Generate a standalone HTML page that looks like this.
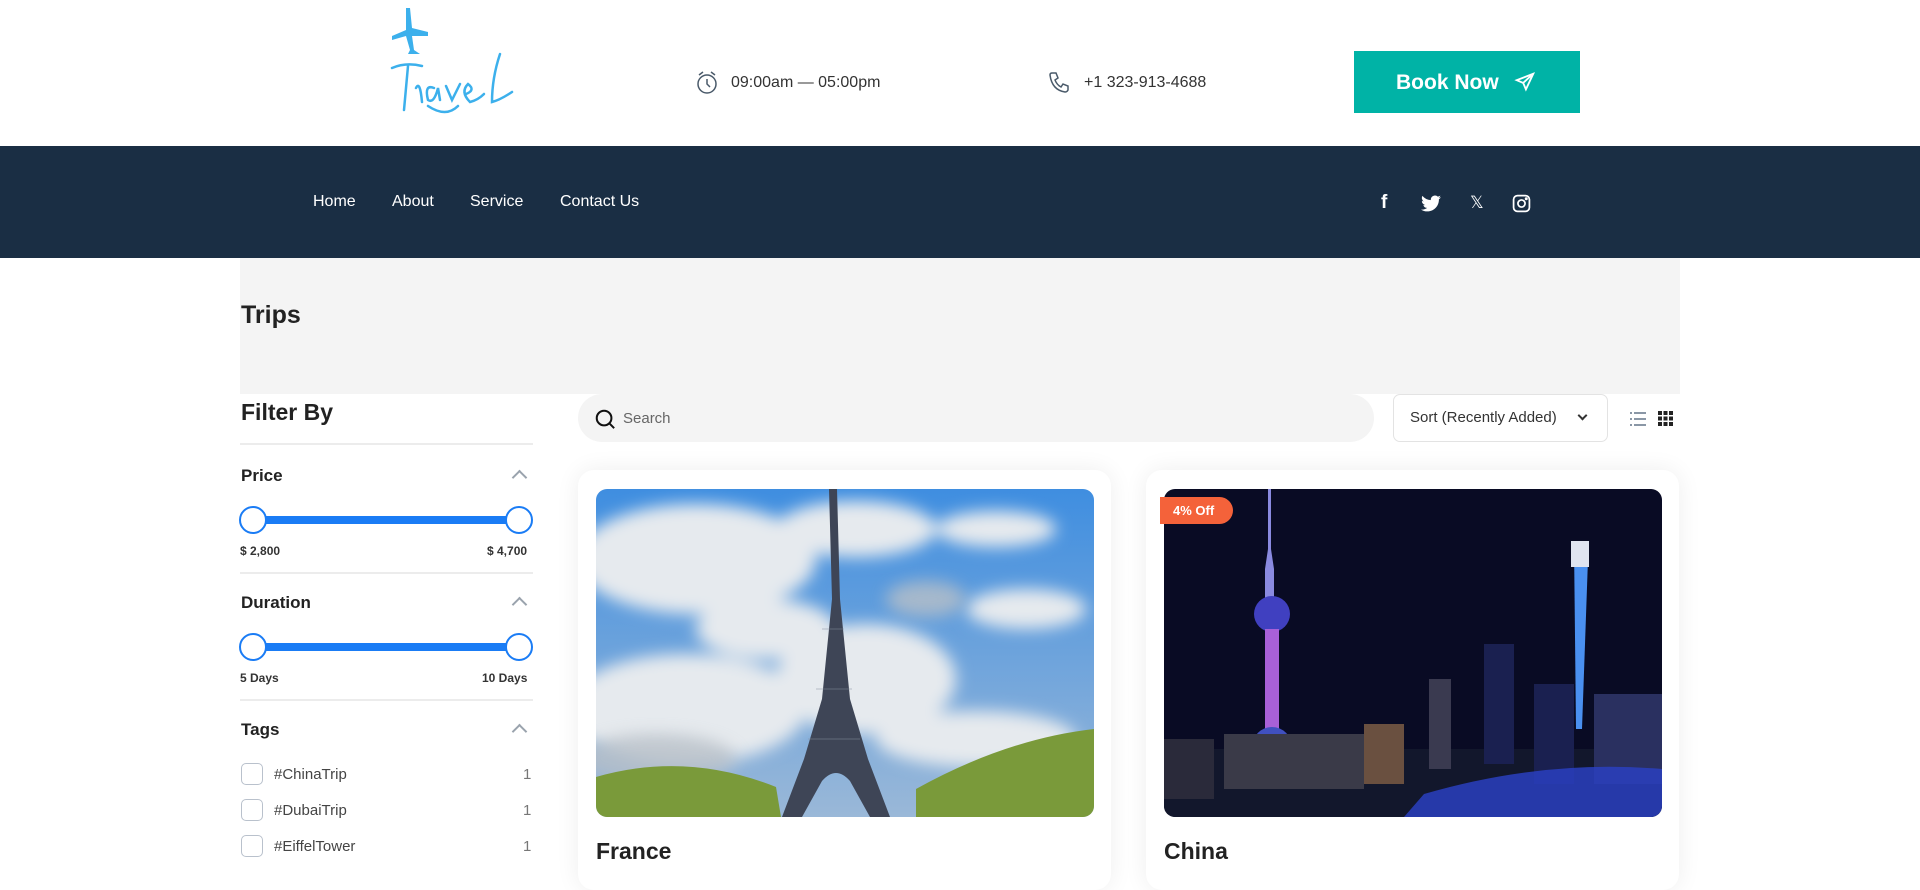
<!DOCTYPE html>
<html><head><meta charset="utf-8"><style>
*{box-sizing:border-box;margin:0;padding:0}
body{width:1920px;height:869px;overflow:hidden;background:#fff;font-family:"Liberation Sans",Arial,sans-serif;color:#222;position:relative}
.a{position:absolute}
.nav a{position:absolute;color:#fff;font-size:16px;top:193px;text-decoration:none}
.lbl{font-weight:bold;font-size:17px;color:#222}
.chev{width:11px;height:11px;border-left:2px solid #9aa3ad;border-top:2px solid #9aa3ad;transform:rotate(45deg)}
.track{height:8px;background:#1a7cf5;left:253px;width:266px}
.th{width:28px;height:28px;border-radius:50%;border:2.5px solid #1a7cf5;background:#fff}
.sm{font-size:12px;font-weight:bold;color:#333}
.hr{height:2px;background:#ececec;left:240px;width:293px}
.cb{width:22px;height:22px;border:1.5px solid #b9c1cc;border-radius:5px;left:241px}
.tg{left:274px;font-size:15px;color:#444}
.ct{left:523px;font-size:15px;color:#777}
.card{background:#fff;border-radius:16px;box-shadow:0 0 24px rgba(0,0,0,.07)}
</style></head><body>
<!-- logo -->
<svg class="a" style="left:386px;top:6px" width="142" height="112" viewBox="0 0 142 112">
<g fill="#3cb0ec"><path d="M20 2 L24 2 L26 22 L42 26 L42 30 L26 30 L28 44 L34 48 L22 48 L24 44 L20 30 L6 34 L6 30 L20 24z"/></g>
<g fill="none" stroke="#3cb0ec" stroke-width="2.5" stroke-linecap="round">
<path d="M6 62 Q20 56 36 60"/><path d="M22 60 L18 104"/>
<path d="M30 82 Q34 74 36 96"/><path d="M48 82 Q38 78 42 94 Q48 98 52 82 L54 94"/>
<path d="M60 80 L66 94 L74 78"/><path d="M80 88 Q90 84 82 78 Q74 86 84 96 Q92 94 98 88"/>
<path d="M114 48 Q106 72 106 96 Q114 94 126 86"/><path d="M42 100 Q60 112 72 100"/>
</g></svg>
<!-- clock -->
<svg class="a" style="left:695px;top:70px" width="24" height="26" viewBox="0 0 24 26" fill="none" stroke="#4a5a6a" stroke-width="1.5"><circle cx="12" cy="14" r="9"/><path d="M12 9v5l3 3M4 5l4-3M20 5l-4-3"/></svg>
<div class="a" style="left:731px;top:74px;font-size:16px;color:#333">09:00am — 05:00pm</div>
<svg class="a" style="left:1047px;top:69px" width="24" height="26" viewBox="0 0 24 24" fill="none" stroke="#4a5a6a" stroke-width="1.5"><path d="M5 3l4 0 2 5-3 2q2 5 6 7l2-3 5 2v4q-1 2-3 2Q5 20 3 5q0-2 2-2z"/></svg>
<div class="a" style="left:1084px;top:74px;font-size:16px;color:#333">+1 323-913-4688</div>
<div class="a" style="left:1354px;top:51px;width:226px;height:62px;background:#00b3a6;color:#fff;font-weight:bold;font-size:21px;line-height:64px;padding-left:42px">Book Now
<svg style="position:absolute;left:160px;top:20px" width="22" height="22" viewBox="0 0 24 24" fill="none" stroke="#fff" stroke-width="2"><path d="M21 3L3 10l7 3 3 7z M10 13l11-10"/></svg></div>
<!-- nav -->
<div class="a nav" style="left:0;top:146px;width:1920px;height:112px;background:#1a2e44"></div>
<div class="nav"><a style="left:313px">Home</a><a style="left:392px">About</a><a style="left:470px">Service</a><a style="left:560px">Contact Us</a></div>
<div class="a" style="left:1381px;top:192px;color:#fff;font-weight:bold;font-size:19px">f</div>
<svg class="a" style="left:1421px;top:195px" width="20" height="17" viewBox="0 0 24 20" fill="#fff"><path d="M24 2.5a10 10 0 0 1-2.8.8A5 5 0 0 0 23.3.6a10 10 0 0 1-3.1 1.2A5 5 0 0 0 11.8 6 14 14 0 0 1 1.7.9a5 5 0 0 0 1.5 6.6A5 5 0 0 1 1 6.9a5 5 0 0 0 4 4.9 5 5 0 0 1-2.2.1 5 5 0 0 0 4.6 3.4A10 10 0 0 1 0 17.3 14 14 0 0 0 7.5 19.5c9 0 14-7.5 14-14v-.6A10 10 0 0 0 24 2.5z"/></svg>
<div class="a" style="left:1470px;top:193px;color:#fff;font-size:17px">𝕏</div>
<svg class="a" style="left:1512px;top:194px" width="19" height="19" viewBox="0 0 24 24" fill="none" stroke="#fff" stroke-width="2.2"><rect x="2" y="2" width="20" height="20" rx="5"/><circle cx="12" cy="12" r="4.5"/><circle cx="18" cy="6" r=".8" fill="#fff"/></svg>
<!-- banner -->
<div class="a" style="left:240px;top:258px;width:1440px;height:136px;background:#f4f4f4"></div>
<div class="a" style="left:241px;top:301px;font-size:25px;font-weight:bold;color:#222">Trips</div>
<!-- sidebar -->
<div class="a" style="left:241px;top:399px;font-size:23px;font-weight:bold;color:#222">Filter By</div>
<div class="a hr" style="top:443px"></div>
<div class="a lbl" style="left:241px;top:466px">Price</div><div class="a chev" style="left:514px;top:472px"></div>
<div class="a track" style="top:516px"></div><div class="a th" style="left:239px;top:506px"></div><div class="a th" style="left:505px;top:506px"></div>
<div class="a sm" style="left:240px;top:544px">$ 2,800</div><div class="a sm" style="left:487px;top:544px">$ 4,700</div>
<div class="a hr" style="top:572px"></div>
<div class="a lbl" style="left:241px;top:593px">Duration</div><div class="a chev" style="left:514px;top:599px"></div>
<div class="a track" style="top:643px"></div><div class="a th" style="left:239px;top:633px"></div><div class="a th" style="left:505px;top:633px"></div>
<div class="a sm" style="left:240px;top:671px">5 Days</div><div class="a sm" style="left:482px;top:671px">10 Days</div>
<div class="a hr" style="top:699px"></div>
<div class="a lbl" style="left:241px;top:720px">Tags</div><div class="a chev" style="left:514px;top:726px"></div>
<div class="a cb" style="top:763px"></div><div class="a tg" style="top:766px">#ChinaTrip</div><div class="a ct" style="top:766px">1</div>
<div class="a cb" style="top:799px"></div><div class="a tg" style="top:802px">#DubaiTrip</div><div class="a ct" style="top:802px">1</div>
<div class="a cb" style="top:835px"></div><div class="a tg" style="top:838px">#EiffelTower</div><div class="a ct" style="top:838px">1</div>
<!-- search -->
<div class="a" style="left:578px;top:394px;width:796px;height:48px;border-radius:24px;background:#f4f4f4"></div>
<svg class="a" style="left:594px;top:408px" width="22" height="22" viewBox="0 0 24 24" fill="none" stroke="#111" stroke-width="2.2"><circle cx="11" cy="11" r="8"/><path d="M17 17l5 5"/></svg>
<div class="a" style="left:623px;top:410px;font-size:15px;color:#666">Search</div>
<div class="a" style="left:1393px;top:394px;width:215px;height:48px;border:1px solid #e3e3e3;border-radius:7px;background:#fff"></div>
<div class="a" style="left:1410px;top:409px;font-size:15px;color:#333">Sort (Recently Added)</div>
<div class="a" style="left:1579px;top:412px;width:7px;height:7px;border-right:2px solid #333;border-bottom:2px solid #333;transform:rotate(45deg)"></div>
<svg class="a" style="left:1630px;top:411px" width="16" height="16" viewBox="0 0 16 16" fill="#8a97a6"><rect x="0" y="1" width="2" height="2"/><rect x="4" y="1" width="12" height="2"/><rect x="0" y="7" width="2" height="2"/><rect x="4" y="7" width="12" height="2"/><rect x="0" y="13" width="2" height="2"/><rect x="4" y="13" width="12" height="2"/></svg>
<svg class="a" style="left:1658px;top:411px" width="15" height="15" viewBox="0 0 15 15" fill="#222"><rect x="0" y="0" width="4" height="4"/><rect x="5.5" y="0" width="4" height="4"/><rect x="11" y="0" width="4" height="4"/><rect x="0" y="5.5" width="4" height="4"/><rect x="5.5" y="5.5" width="4" height="4"/><rect x="11" y="5.5" width="4" height="4"/><rect x="0" y="11" width="4" height="4"/><rect x="5.5" y="11" width="4" height="4"/><rect x="11" y="11" width="4" height="4"/></svg>
<!-- cards -->
<div class="a card" style="left:578px;top:470px;width:533px;height:420px"></div>
<div class="a card" style="left:1146px;top:470px;width:533px;height:420px"></div>
<svg class="a" style="left:596px;top:489px;border-radius:11px" width="498" height="328" viewBox="0 0 498 328">
<defs><linearGradient id="s" x1="0" y1="0" x2="0" y2="1"><stop offset="0" stop-color="#3f8ee0"/><stop offset="1" stop-color="#9ab8d8"/></linearGradient>
<filter id="b"><feGaussianBlur stdDeviation="8"/></filter></defs>
<rect width="498" height="328" fill="url(#s)"/>
<g fill="#e6eaee" filter="url(#b)"><ellipse cx="100" cy="70" rx="120" ry="55"/><ellipse cx="260" cy="40" rx="80" ry="28"/><ellipse cx="90" cy="220" rx="120" ry="55"/><ellipse cx="270" cy="190" rx="90" ry="55"/><ellipse cx="430" cy="120" rx="60" ry="20"/><ellipse cx="380" cy="250" rx="100" ry="28"/><ellipse cx="170" cy="140" rx="70" ry="30"/><ellipse cx="400" cy="40" rx="60" ry="18"/></g>
<g fill="#b8c0c8" filter="url(#b)" opacity=".8"><ellipse cx="60" cy="270" rx="80" ry="25"/><ellipse cx="330" cy="110" rx="40" ry="18"/></g>
<path d="M233 0h8l3 110 10 100 18 60 22 58h-20l-20-36q-14-16-28 0l-20 36h-20l22-58 18-60 10-100z" fill="#3e4556"/>
<g stroke="#8890a0" stroke-width="1" opacity=".5"><path d="M226 140h22M220 200h36M212 250h52"/></g>
<path d="M0 288 Q90 262 180 298 L185 328 H0z M320 300 Q410 250 498 240 V328 H320z" fill="#7a9a3a"/>
</svg>
<svg class="a" style="left:1164px;top:489px;border-radius:11px" width="498" height="328" viewBox="0 0 498 328">
<rect width="498" height="328" fill="#090b24"/>
<rect x="0" y="260" width="498" height="68" fill="#12172c"/>
<path d="M104 0h3v60l3 20v40h-9v-40l3-20z" fill="#8a8ae0"/><circle cx="108" cy="125" r="18" fill="#4040c0"/><rect x="101" y="140" width="14" height="110" fill="#a860d8"/><circle cx="108" cy="258" r="20" fill="#4050c0"/>
<path d="M410 55h12l2 15-6 170h-6z" fill="#4a90f0"/><rect x="407" y="52" width="18" height="26" fill="#e0e4f0"/>
<rect x="320" y="155" width="30" height="120" fill="#1a2050"/><rect x="265" y="190" width="22" height="90" fill="#3a3a50"/><rect x="200" y="235" width="40" height="60" fill="#6a5040"/><rect x="60" y="245" width="140" height="55" fill="#3a3a48"/><rect x="370" y="195" width="40" height="100" fill="#1a2050"/><rect x="430" y="205" width="68" height="90" fill="#2a3060"/><rect x="0" y="250" width="50" height="60" fill="#2a2a3a"/>
<path d="M260 305 Q380 270 498 280 V328 H240z" fill="#2a40c0" opacity=".85"/>
</svg>
<div class="a" style="left:1160px;top:497px;width:73px;height:27px;background:#f4623a;border-radius:0 14px 14px 0;color:#fff;font-weight:bold;font-size:13px;line-height:27px;padding-left:13px">4% Off</div>
<div class="a" style="left:596px;top:838px;font-size:23px;font-weight:bold;color:#222">France</div>
<div class="a" style="left:1164px;top:838px;font-size:23px;font-weight:bold;color:#222">China</div>
</body></html>
